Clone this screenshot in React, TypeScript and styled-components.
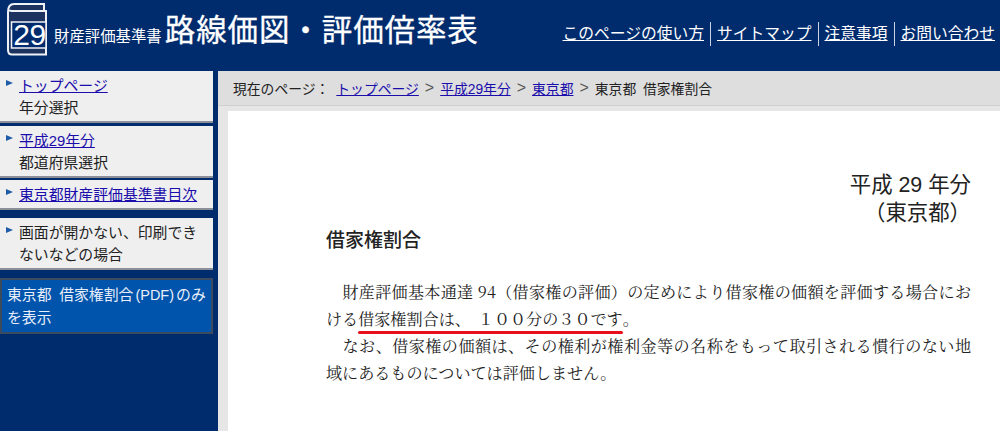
import React from "react";
import styled, { createGlobalStyle } from "styled-components";

const Global = createGlobalStyle`
  html, body { margin: 0; padding: 0; background: #002c6e; }
  body { font-family: "Liberation Sans", "Noto Sans CJK JP", sans-serif; overflow: hidden; }
  a { color: #1a0dab; }
`;

const Page = styled.div`
  width: 1000px;
  height: 431px;
  overflow: hidden;
  display: flex;
  flex-direction: column;
  background: #002c6e;
`;

const Header = styled.header`
  height: 71px;
  flex: none;
  display: flex;
  align-items: flex-start;
  color: #fff;
`;

const Logo = styled.div`
  position: relative;
  width: 42px;
  height: 54px;
  margin: 3px 0 0 7px;
  flex: none;
`;

const LogoNumber = styled.span`
  position: absolute;
  left: 3px;
  right: 0;
  top: 14px;
  text-align: center;
  font: 30px/36px "Liberation Sans", sans-serif;
  letter-spacing: -0.5px;
  color: #fff;
`;

const SubTitle = styled.span`
  font-size: 15.4px;
  line-height: 20px;
  margin: 27px 0 0 5px;
  white-space: nowrap;
`;

const MainTitle = styled.h1`
  margin: 8px 0 0 3px;
  font-size: 30.5px;
  line-height: 44px;
  font-weight: 400;
  white-space: nowrap;
  letter-spacing: 0.9px;
  -webkit-text-stroke: 0.3px #fff;
`;

const TopNav = styled.nav`
  margin: 22px 0 0 auto;
  display: flex;
  align-items: center;
  height: 24px;
`;

const TopLink = styled.a`
  color: #fff;
  font-size: 15.75px;
  line-height: 24px;
  white-space: nowrap;
  padding: 0 6px;
  &:last-child { padding-right: 5px; }
`;

const NavSep = styled.span`
  width: 1px;
  height: 24px;
  background: #c9d3e3;
`;

const Body = styled.div`
  flex: 1;
  display: flex;
  min-height: 0;
`;

const Side = styled.aside`
  width: 218px;
  flex: none;
  display: flex;
  flex-direction: column;
`;

const SideCard = styled.div<{ $gap: number }>`
  width: 213px;
  box-sizing: border-box;
  background: #efefef;
  border-bottom: 2px solid #8a8f99;
  padding: 4px 4px 2px 19px;
  margin-bottom: ${(p) => p.$gap}px;
  position: relative;
  font-size: 14.85px;
  line-height: 22px;
  color: #222;
  &::before {
    content: "";
    position: absolute;
    left: 6px;
    top: 9px;
    border-left: 7px solid #1f5ca8;
    border-top: 3.5px solid transparent;
    border-bottom: 3.5px solid transparent;
  }
`;

const SideLine = styled.div`
  white-space: nowrap;
`;

const CurrentCard = styled.div`
  width: 213px;
  height: 56px;
  box-sizing: border-box;
  background: #0054ab;
  border: 2px solid #3c4a5e;
  padding: 4px 0 0 5px;
  font-size: 14.85px;
  line-height: 23px;
  color: #e8eefa;
  word-spacing: 3.5px;
  white-space: nowrap;
`;

const PdfTag = styled.span`
  font-family: "Liberation Sans Narrow", "Liberation Sans", sans-serif;
  font-size: 14.5px;
  padding: 0 2px;
`;

const Main = styled.main`
  flex: 1;
  display: flex;
  flex-direction: column;
  min-width: 0;
  background: #e6e6e6;
`;

const Crumbs = styled.div`
  height: 35px;
  flex: none;
  box-sizing: border-box;
  background: #dedede;
  border-bottom: 1px solid #cfcfcf;
  display: flex;
  align-items: center;
  padding-left: 15px;
  font-size: 13.8px;
  color: #222;
  white-space: nowrap;
  word-spacing: 3px;
`;

const CrumbLabel = styled.span`
  margin-right: 7px;
`;

const CrumbSep = styled.span`
  margin: 0 6px;
  font-size: 16px;
  color: #555;
`;

const Sheet = styled.section`
  flex: 1;
  margin: 5px 0 0 10px;
  background: #fff;
  padding: 60px 29px 0 98px;
  color: #222;
`;

const DateBlock = styled.div`
  text-align: right;
  font-size: 21.4px;
  line-height: 28px;
`;

const DocTitle = styled.h2`
  margin: 0;
  font-size: 19px;
  line-height: 28px;
  font-weight: 500;
`;

const Para = styled.div`
  margin-top: 23px;
  font-family: "Noto Serif CJK JP", "Noto Sans CJK JP", serif;
  font-size: 16.1px;
  line-height: 27px;
`;

const ParaLine = styled.div`
  white-space: nowrap;
  text-align: justify;
  text-align-last: justify;
`;

const ParaLineShort = styled.div`
  white-space: nowrap;
`;

const Marked = styled.span`
  position: relative;
  &::after {
    content: "";
    position: absolute;
    left: 0;
    right: 0;
    bottom: -4px;
    height: 3px;
    border-radius: 2px;
    background: #e8101c;
  }
`;

const Digits = styled.span`
  margin-left: 7px;
`;

export default function App() {
  return (
    <Page>
      <Global />
      <Header>
        <Logo>
          <svg width="42" height="54" viewBox="0 0 42 54" fill="none">
            <path
              d="M1 9 C1 3.5 3 1 7 1 H37 V8 M1 9 C1 6.5 3 8 6 8 H39 V51.5 H5 C2.5 51.5 1 50 1 47 Z"
              fill="#1c335f"
              stroke="#eef1f6"
              strokeWidth="2"
            />
            <rect x="4.5" y="19" width="34.5" height="26" fill="#002c6e" stroke="#eef1f6" strokeWidth="1.5" />
          </svg>
          <LogoNumber>29</LogoNumber>
        </Logo>
        <SubTitle>財産評価基準書</SubTitle>
        <MainTitle>路線価図・評価倍率表</MainTitle>
        <TopNav>
          <TopLink href="#">このページの使い方</TopLink>
          <NavSep />
          <TopLink href="#">サイトマップ</TopLink>
          <NavSep />
          <TopLink href="#">注意事項</TopLink>
          <NavSep />
          <TopLink href="#">お問い合わせ</TopLink>
        </TopNav>
      </Header>
      <Body>
        <Side>
          <SideCard $gap={3}>
            <SideLine><a href="#">トップページ</a></SideLine>
            <SideLine>年分選択</SideLine>
          </SideCard>
          <SideCard $gap={2}>
            <SideLine><a href="#">平成29年分</a></SideLine>
            <SideLine>都道府県選択</SideLine>
          </SideCard>
          <SideCard $gap={8}>
            <SideLine><a href="#">東京都財産評価基準書目次</a></SideLine>
          </SideCard>
          <SideCard $gap={8}>
            <SideLine>画面が開かない、印刷でき</SideLine>
            <SideLine>ないなどの場合</SideLine>
          </SideCard>
          <CurrentCard>
            東京都 借家権割合<PdfTag>(PDF)</PdfTag>のみ
            <br />
            を表示
          </CurrentCard>
        </Side>
        <Main>
          <Crumbs>
            <CrumbLabel>現在のページ：</CrumbLabel>
            <a href="#">トップページ</a>
            <CrumbSep>&gt;</CrumbSep>
            <a href="#">平成29年分</a>
            <CrumbSep>&gt;</CrumbSep>
            <a href="#">東京都</a>
            <CrumbSep>&gt;</CrumbSep>
            <span>東京都 借家権割合</span>
          </Crumbs>
          <Sheet>
            <DateBlock>
              平成 29 年分
              <br />
              （東京都）
            </DateBlock>
            <DocTitle>借家権割合</DocTitle>
            <Para>
              <ParaLine>　財産評価基本通達 94（借家権の評価）の定めにより借家権の価額を評価する場合にお</ParaLine>
              <ParaLineShort>ける<Marked>借家権割合は、<Digits>１００分の３０です</Digits></Marked>。</ParaLineShort>
              <ParaLine>　なお、借家権の価額は、その権利が権利金等の名称をもって取引される慣行のない地</ParaLine>
              <ParaLineShort>域にあるものについては評価しません。</ParaLineShort>
            </Para>
          </Sheet>
        </Main>
      </Body>
    </Page>
  );
}
